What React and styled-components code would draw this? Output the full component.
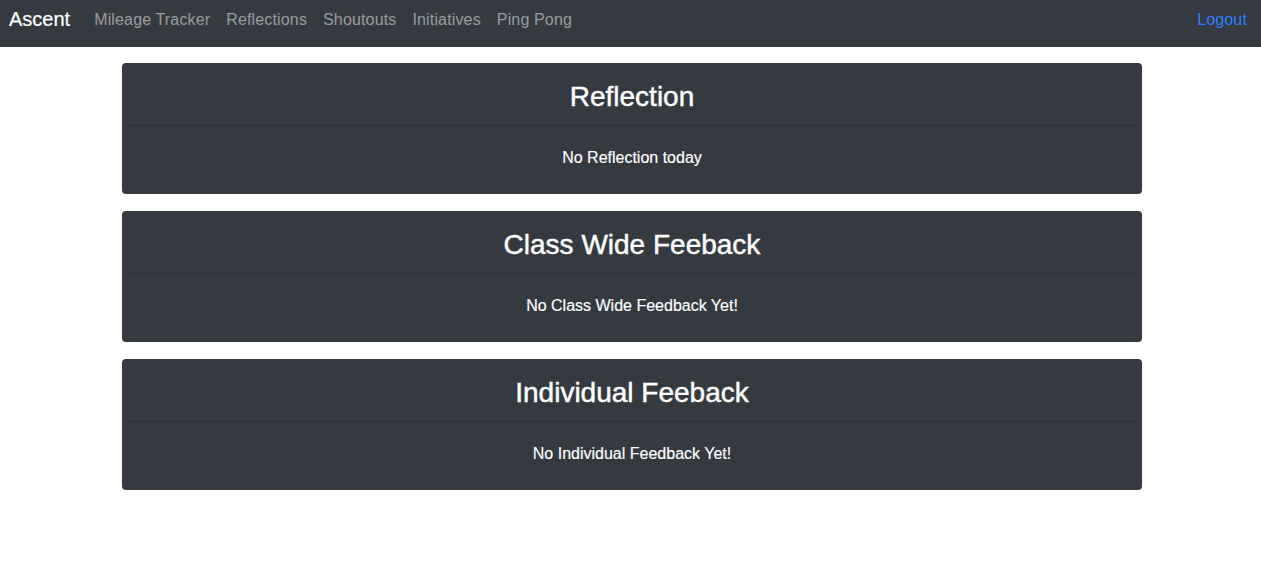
import React from 'react'
import styled, { createGlobalStyle } from 'styled-components'

const GlobalStyle = createGlobalStyle`
	body {
		margin: 0;
		background: #fff;
		font-family: "Liberation Sans", Arial, sans-serif;
		font-size: 16px;
		line-height: 1.5;
		color: #212529;
	}
`

const Navbar = styled.nav`
	display: flex;
	align-items: flex-start;
	height: 47px;
	padding: 0 6px 0 9px;
	background: #343a40;
	box-sizing: border-box;
`

const Brand = styled.a`
	padding-top: 4px;
	margin-right: 16px;
	font-size: 20px;
	line-height: 30px;
	color: #fff;
	text-decoration: none;
	-webkit-text-stroke: 0.2px #fff;
`

const NavList = styled.div`
	display: flex;
	flex: 1;
`

const NavLink = styled.a`
	padding: 8px;
	line-height: 24px;
	letter-spacing: 0.15px;
	color: ${props => (props.accent ? '#2f80ff' : 'rgba(255, 255, 255, 0.5)')};
	text-decoration: none;
	margin-left: ${props => (props.right ? 'auto' : '0')};
`

const Main = styled.main`
	display: flex;
	flex-direction: column;
	align-items: center;
	gap: 17px;
	padding: 16px 0 0 3px;
`

const Card = styled.section`
	width: 1020px;
	padding: 0 5px;
	box-sizing: border-box;
	background: #343a40;
	border-radius: 4px;
	color: #fff;
	text-align: center;
`

const CardHeader = styled.div`
	padding: 17px 20px 11px;
	border-bottom: 1px solid rgba(0, 0, 0, 0.15);
`

const Title = styled.h3`
	margin: 0;
	font-size: 28px;
	font-weight: 500;
	line-height: 34px;
	-webkit-text-stroke: 0.45px #fff;
`

const CardBody = styled.div`
	padding: 20px 20px 24px;
	line-height: 24px;
	-webkit-text-stroke: 0.15px #fff;
`

const sections = [
	{ title: 'Reflection', empty: 'No Reflection today' },
	{ title: 'Class Wide Feeback', empty: 'No Class Wide Feedback Yet!' },
	{ title: 'Individual Feeback', empty: 'No Individual Feedback Yet!' },
]

export default function App() {
	return (
		<>
			<GlobalStyle />
			<Navbar>
				<Brand href="#">Ascent</Brand>
				<NavList>
					<NavLink href="#">Mileage Tracker</NavLink>
					<NavLink href="#">Reflections</NavLink>
					<NavLink href="#">Shoutouts</NavLink>
					<NavLink href="#">Initiatives</NavLink>
					<NavLink href="#">Ping Pong</NavLink>
					<NavLink href="#" accent right>
						Logout
					</NavLink>
				</NavList>
			</Navbar>
			<Main>
				{sections.map(section => (
					<Card key={section.title}>
						<CardHeader>
							<Title>{section.title}</Title>
						</CardHeader>
						<CardBody>{section.empty}</CardBody>
					</Card>
				))}
			</Main>
		</>
	)
}
